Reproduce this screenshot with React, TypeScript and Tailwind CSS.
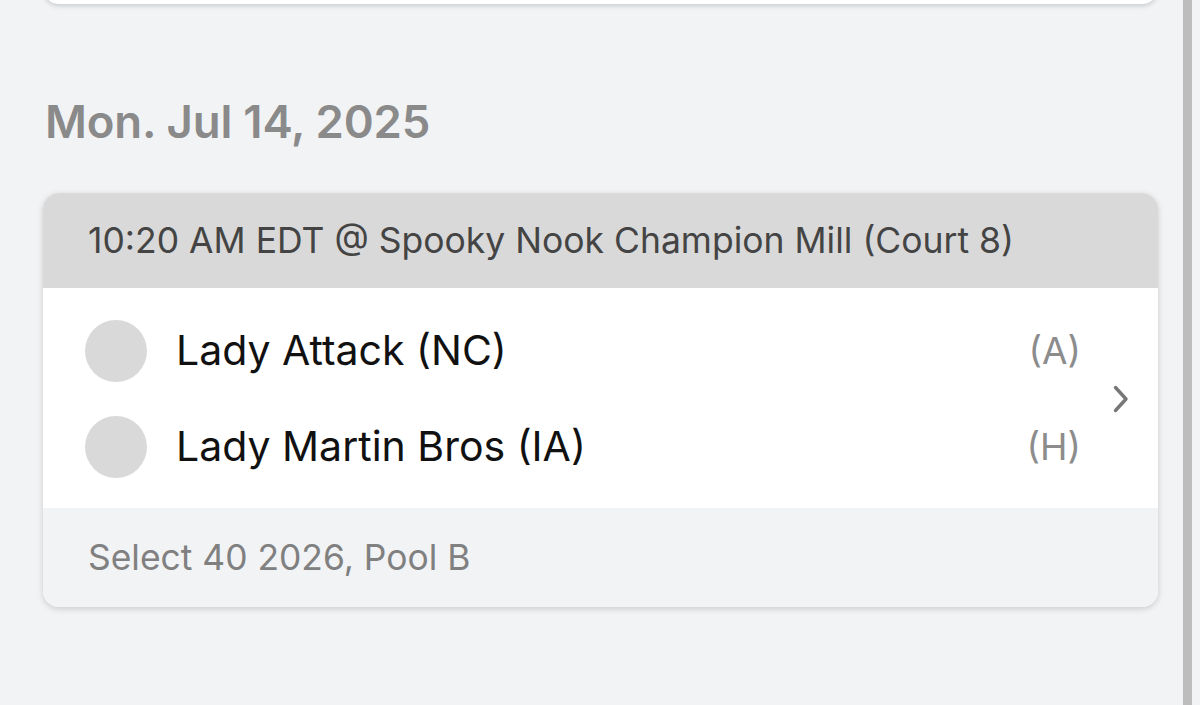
import React from "react";

type Team = { name: string; side: string };

const teams: Team[] = [
  { name: "Lady Attack (NC)", side: "(A)" },
  { name: "Lady Martin Bros (IA)", side: "(H)" },
];

function Chevron() {
  return (
    <svg width="16" height="28" viewBox="0 0 16 28" fill="none">
      <polyline
        points="2.5,2.5 13,14 2.5,25.5"
        stroke="#777"
        strokeWidth="3.4"
        strokeLinecap="round"
        strokeLinejoin="round"
      />
    </svg>
  );
}

export default function App() {
  return (
    <div
      className="flex h-[705px] w-[1200px] overflow-hidden bg-[#f2f3f5]"
      style={{ fontFamily: "Inter, Lato, 'Noto Sans', sans-serif" }}
    >
      <div className="flex flex-1 flex-col pl-[43px] pr-[25px]">
        {/* previous card, cut off at the top */}
        <div className="-mt-[16px] h-[20px] shrink-0 rounded-b-2xl bg-white shadow-[0_2px_5px_rgba(0,0,0,0.16)]" />

        <h2 className="mt-[89px] pl-[2px] text-[45.5px] font-semibold leading-[57px] tracking-[-0.2px] text-[#8a8a8a]">
          Mon. Jul 14, 2025
        </h2>

        <div className="mt-[43px] overflow-hidden rounded-2xl bg-white shadow-[0_2px_6px_rgba(0,0,0,0.16)]">
          <div className="flex h-[95px] items-center bg-[#d9d9d9] pl-[45px] text-[35.5px] text-[#444]">
            10:20 AM EDT @ Spooky Nook Champion Mill (Court 8)
          </div>

          <div className="flex items-center pt-[15px] pb-[13px]">
            <div className="flex flex-1 flex-col">
              {teams.map((t) => (
                <div key={t.name} className="flex h-[96px] items-center pl-[42px]">
                  <div className="h-[62px] w-[62px] shrink-0 rounded-full bg-[#d9d9d9]" />
                  <span className="ml-[29px] flex-1 text-[41px] text-[#111]">{t.name}</span>
                  <span className="text-[37px] text-[#8c8c8c]">{t.side}</span>
                </div>
              ))}
            </div>
            <div className="flex w-[77px] justify-center pl-[3px]">
              <Chevron />
            </div>
          </div>

          <div className="flex h-[99px] items-center bg-[#f2f3f5] pl-[45px] text-[35.4px] text-[#808080]">
            Select 40 2026, Pool B
          </div>
        </div>
      </div>

      {/* scrollbar */}
      <div className="w-[9px] shrink-0 bg-[#bdbdbd]" />
      <div className="w-[8px] shrink-0" />
    </div>
  );
}
